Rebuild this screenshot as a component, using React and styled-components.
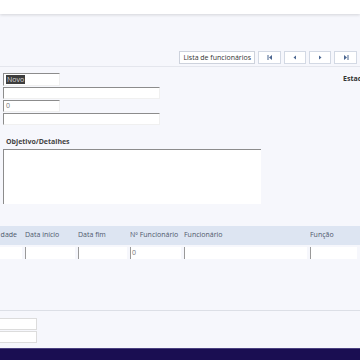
import React from 'react'
import styled, {createGlobalStyle} from 'styled-components'

const Global = createGlobalStyle`
  html, body {
    margin: 0;
    padding: 0;
    background: #f6f7fc;
    font-family: "Open Sans", "Noto Sans", sans-serif;
    overflow: hidden;
  }
`

const Page = styled.div`
  width: 360px;
  height: 360px;
  display: flex;
  flex-direction: column;
  overflow: hidden;
`

const TopBar = styled.div`
  height: 14px;
  flex: none;
  background: #fff;
  box-shadow: 0 1px 3px rgba(0, 0, 0, 0.14);
`

const Toolbar = styled.div`
  display: flex;
  justify-content: flex-end;
  gap: 3px;
  padding: 37px 3px 0 0;
`

const ListButton = styled.button`
  height: 13px;
  box-sizing: border-box;
  padding: 0 3px;
  border: 1px solid #cdd2dc;
  background: #fff;
  color: #333;
  font: 7px "Open Sans", sans-serif;
  line-height: 11px;
`

const NavButton = styled.button`
  width: ${p => p.$w || 22}px;
  height: 13px;
  box-sizing: border-box;
  border: 1px solid #d3d9e4;
  background: #fff;
  padding: 0;
  display: flex;
  align-items: center;
  justify-content: center;
  svg { display: block; }
`

const Divider = styled.div`
  margin-top: 2px;
  border-bottom: 1px solid #e4e6ed;
`

const FormRow = styled.div`
  display: flex;
  justify-content: space-between;
  padding: 6px 0 0 3px;
`

const Fields = styled.div`
  display: flex;
  flex-direction: column;
  gap: 1px;
`

const Field = styled.div`
  width: ${p => p.$w}px;
  height: ${p => p.$h}px;
  box-sizing: border-box;
  background: #fff;
  border-top: 1px solid #8c8c8c;
  border-left: 1px solid #8c8c8c;
  border-right: 1px solid #f0f0f0;
  border-bottom: 1px solid #f0f0f0;
  font-size: 7px;
  line-height: ${p => p.$h - 2}px;
  color: #777;
  padding-left: 2px;
`

const Selected = styled.span`
  background: #3d3d3d;
  color: #d8d8d8;
  padding: 0 1px;
`

const StateLabel = styled.div`
  font-size: 7px;
  font-weight: 700;
  color: #333;
  width: 17px;
  overflow: hidden;
  white-space: nowrap;
  padding-top: 1px;
`

const DetailBlock = styled.div`
  padding: 12px 0 0 3px;
`

const Label = styled.div`
  font-size: 7px;
  font-weight: 700;
  color: #444;
  padding-left: 3px;
  line-height: 9px;
`

const TextArea = styled.div`
  margin-top: 3px;
  width: 258px;
  height: 55px;
  box-sizing: border-box;
  background: #fff;
  border-top: 1px solid #8c8c8c;
  border-left: 1px solid #8c8c8c;
`

const TableWrap = styled.div`
  margin-top: 22px;
  overflow: hidden;
`

const Grid = styled.div`
  display: grid;
  grid-template-columns: 25px 53px 52px 54px 126px 50px;
`

const HeadCell = styled.div`
  background: #dde5f2;
  height: 19px;
  font-size: 7px;
  line-height: 17px;
  color: #4e586c;
  white-space: nowrap;
  overflow: hidden;
  display: flex;
  justify-content: ${p => (p.$right ? 'flex-end' : 'flex-start')};
  padding-right: ${p => (p.$right ? 8 : 0)}px;
`

const Cell = styled.div`
  margin-top: 2px;
  margin-right: 3px;
  height: 12px;
  box-sizing: border-box;
  background: #fff;
  border-left: 1px solid ${p => (p.$bare ? '#fff' : '#999')};
  font-size: 7px;
  line-height: 12px;
  color: #777;
  padding-left: 1px;
`

const Spacer = styled.div`
  flex: 1;
`

const Footer = styled.div`
  border-top: 1px solid #dcdfe6;
  padding-top: 7px;
  display: flex;
  flex-direction: column;
  gap: 1px;
  padding-bottom: 5px;
`

const SmallBox = styled.div`
  width: 37px;
  height: 12px;
  box-sizing: border-box;
  background: #fff;
  border: 1px solid #dcdcdc;
  border-left: none;
`

const BottomBar = styled.div`
  height: 11px;
  flex: none;
  background: #1a0e52;
  border-top: 1px solid #4a4080;
`

const Arrow = ({kind}) => {
  const c = '#4b6690'
  return (
    <svg width="6" height="5" viewBox="0 0 6 5">
      {kind === 'first' && (
        <>
          <rect x="0.5" y="0" width="1" height="5" fill={c} />
          <polygon points="5,0 5,5 2,2.5" fill={c} />
        </>
      )}
      {kind === 'prev' && <polygon points="4,0.5 4,4.5 1.5,2.5" fill={c} />}
      {kind === 'next' && <polygon points="2,0.5 2,4.5 4.5,2.5" fill={c} />}
      {kind === 'last' && (
        <>
          <polygon points="1,0 1,5 4,2.5" fill={c} />
          <rect x="4.5" y="0" width="1" height="5" fill={c} />
        </>
      )}
    </svg>
  )
}

const columns = ['Entidade', 'Data início', 'Data fim', 'Nº Funcionário', 'Funcionário', 'Função']

export default function App() {
  return (
    <Page>
      <Global />
      <TopBar />
      <Toolbar>
        <ListButton>Lista de funcionários</ListButton>
        <NavButton $w={23}><Arrow kind="first" /></NavButton>
        <NavButton $w={22}><Arrow kind="prev" /></NavButton>
        <NavButton $w={22}><Arrow kind="next" /></NavButton>
        <NavButton $w={23}><Arrow kind="last" /></NavButton>
      </Toolbar>
      <Divider />
      <FormRow>
        <Fields>
          <Field $w={57} $h={13}><Selected>Novo</Selected></Field>
          <Field $w={157} $h={12} />
          <Field $w={57} $h={12}>0</Field>
          <Field $w={157} $h={12} />
        </Fields>
        <StateLabel>Estado</StateLabel>
      </FormRow>
      <DetailBlock>
        <Label>Objetivo/Detalhes</Label>
        <TextArea />
      </DetailBlock>
      <TableWrap>
        <Grid>
          {columns.map((c, i) => (
            <HeadCell key={c} $right={i === 0}>{i === 0 ? 'dade' : c}</HeadCell>
          ))}
          {columns.map((c, i) => (
            <Cell key={c} $bare={i === 0}>{c === 'Nº Funcionário' ? '0' : ''}</Cell>
          ))}
        </Grid>
      </TableWrap>
      <Spacer />
      <Footer>
        <SmallBox />
        <SmallBox />
      </Footer>
      <BottomBar />
    </Page>
  )
}
